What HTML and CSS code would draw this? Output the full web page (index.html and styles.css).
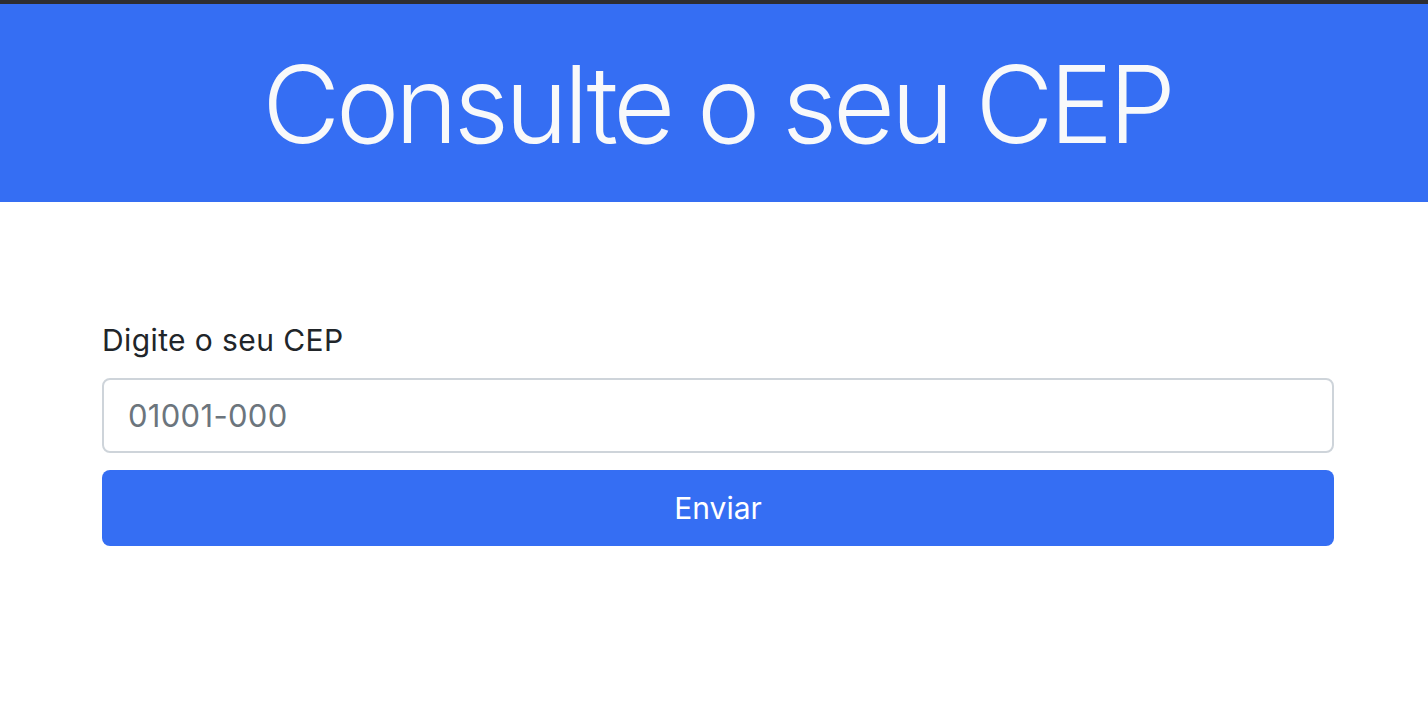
FILE: index.html
```html
<!DOCTYPE html>
<html lang="pt-BR">
<head>
<meta charset="utf-8">
<title>Consulte o seu CEP</title>
<link rel="stylesheet" href="styles.css">
</head>
<body>
<div class="topbar"></div>
<header class="hero">
  <h1 class="hero-title">Consulte o seu CEP</h1>
</header>
<main class="content">
  <form class="cep-form">
    <label class="form-label" for="cep">Digite o seu CEP</label>
    <input class="form-control" id="cep" type="text" placeholder="01001-000">
    <button class="btn-primary" type="button">Enviar</button>
  </form>
</main>
</body>
</html>
```

FILE: styles.css
```css
* { box-sizing: border-box; }
html, body { margin: 0; padding: 0; background: #fff; }
body {
  font-family: Inter, "Liberation Sans", sans-serif;
  color: #212529;
}
.topbar {
  height: 4px;
  background: #2e2e31;
}
.hero {
  background: #356ef3;
  height: 198px;
  display: flex;
  align-items: center;
  justify-content: center;
}
.hero-title {
  margin: 0;
  color: #f8f9fa;
  font-weight: 300;
  font-size: 107px;
  line-height: 1;
  letter-spacing: -4.2px;
  padding-top: 2px;
  padding-left: 6px;
}
.content {
  padding: 120px 94px 0 102px;
}
.cep-form {
  display: flex;
  flex-direction: column;
}
.form-label {
  font-size: 30px;
  line-height: 36px;
  letter-spacing: 0.4px;
  margin-bottom: 20px;
}
.form-control {
  height: 75px;
  border: 2px solid #ced4da;
  border-radius: 8px;
  padding: 0 24px;
  font-family: inherit;
  font-size: 31px;
  letter-spacing: 0.3px;
  color: #212529;
  outline: none;
}
.form-control::placeholder { color: #6c757d; }
.btn-primary {
  margin-top: 17px;
  height: 76px;
  border: none;
  border-radius: 8px;
  background: #356ef3;
  color: #fff;
  font-family: inherit;
  font-size: 30px;
  cursor: pointer;
}
```
